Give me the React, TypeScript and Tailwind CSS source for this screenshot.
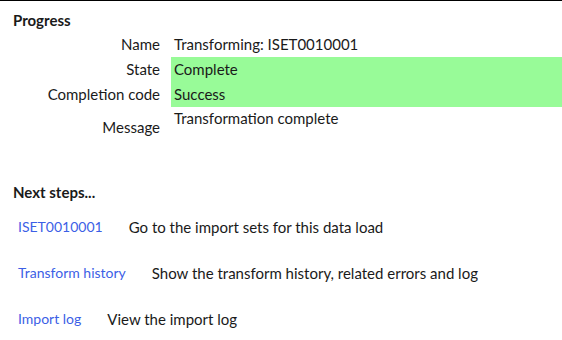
export default function App() {
    const steps = [
        { link: "ISET0010001", text: "Go to the import sets for this data load" },
        { link: "Transform history", text: "Show the transform history, related errors and log" },
        { link: "Import log", text: "View the import log" },
    ]

    return (
        <div className="w-[562px] h-[340px] bg-white border-t border-black text-[15px] text-[#1a1a1a] font-['Lato',sans-serif] overflow-hidden">
            {/* Progress */}
            <div className="px-[13px] pt-[9px]">
                <h2 className="font-bold text-[15px] leading-5">Progress</h2>
            </div>
            <div className="mt-[2px]">
                <div className="flex h-[25px] items-center">
                    <div className="w-[160px] text-right">Name</div>
                    <div className="ml-[11px] flex-1 pl-[3px]">Transforming: ISET0010001</div>
                </div>
                <div className="flex h-[25px]">
                    <div className="w-[160px] text-right flex items-center justify-end">State</div>
                    <div className="ml-[11px] flex-1 pl-[3px] bg-[#98fb98] flex items-center">Complete</div>
                </div>
                <div className="flex h-[25px]">
                    <div className="w-[160px] text-right flex items-center justify-end">Completion code</div>
                    <div className="ml-[11px] flex-1 pl-[3px] bg-[#98fb98] flex items-center">Success</div>
                </div>
                <div className="flex h-[40px]">
                    <div className="w-[160px] text-right flex items-center justify-end">Message</div>
                    <div className="ml-[11px] flex-1 pl-[3px]">Transformation complete</div>
                </div>
            </div>

            {/* Next steps */}
            <div className="px-[13px] mt-[35px]">
                <h2 className="font-bold text-[15px] leading-5">Next steps...</h2>
            </div>
            <div className="px-[18px] mt-[15px] flex flex-col gap-[26px]">
                {steps.map((s) => (
                    <div key={s.link} className="flex items-center gap-[26px] leading-5">
                        <a className="text-[#3c5fe6] text-[14px]" href="#">{s.link}</a>
                        <span>{s.text}</span>
                    </div>
                ))}
            </div>
        </div>
    )
}
